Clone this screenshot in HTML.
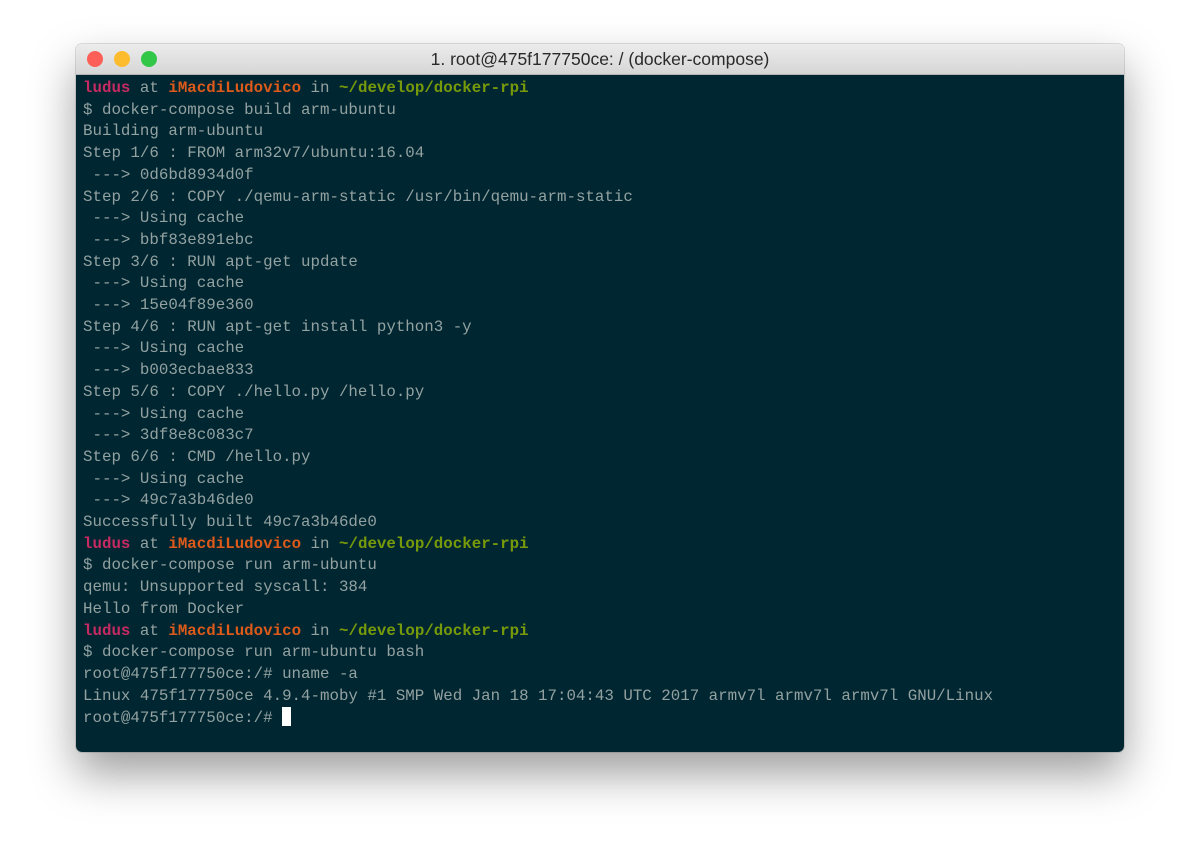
<!DOCTYPE html>
<html><head><style>
html,body{margin:0;padding:0;background:#fff;width:1200px;height:861px;overflow:hidden}
.win{position:absolute;left:76px;top:44px;width:1048px;height:708px;border-radius:6px;overflow:hidden;box-shadow:0 22px 45px rgba(0,0,0,0.38),0 0 0 1px rgba(0,0,0,0.12)}
.tb{height:30px;background:linear-gradient(#ececec,#d6d6d6);border-bottom:1px solid #b4b4b4;position:relative;font-family:"Liberation Sans",sans-serif;font-size:17.5px;color:#2a2a2a;text-align:center;line-height:31px}
.d{position:absolute;top:7px;width:16px;height:16px;border-radius:50%}
.term{position:absolute;top:31px;left:0;right:0;bottom:0;background:#002731;padding:3px 0 0 7px;font-family:"Liberation Mono",monospace;font-size:15.8px;line-height:21.7px;color:#93a1a1;white-space:pre}
.m{color:#c72a62;font-weight:bold}.o{color:#dd5a1a;font-weight:bold}.g{color:#789a0a;font-weight:bold}.b{font-weight:normal}
.cur{display:inline-block;width:9px;height:19px;background:#fff;vertical-align:-4px}
</style></head><body>
<div class="win">
<div class="tb"><span class="d" style="left:11px;background:#fc5f57"></span><span class="d" style="left:38px;background:#fdbc2e"></span><span class="d" style="left:65px;background:#33c748"></span>1. root@475f177750ce: / (docker-compose)</div>
<div class="term"><span class="m">ludus</span> <span class="b">at</span> <span class="o">iMacdiLudovico</span> <span class="b">in</span> <span class="g">~/develop/docker-rpi</span>
$ docker-compose build arm-ubuntu
Building arm-ubuntu
Step 1/6 : FROM arm32v7/ubuntu:16.04
 ---&gt; 0d6bd8934d0f
Step 2/6 : COPY ./qemu-arm-static /usr/bin/qemu-arm-static
 ---&gt; Using cache
 ---&gt; bbf83e891ebc
Step 3/6 : RUN apt-get update
 ---&gt; Using cache
 ---&gt; 15e04f89e360
Step 4/6 : RUN apt-get install python3 -y
 ---&gt; Using cache
 ---&gt; b003ecbae833
Step 5/6 : COPY ./hello.py /hello.py
 ---&gt; Using cache
 ---&gt; 3df8e8c083c7
Step 6/6 : CMD /hello.py
 ---&gt; Using cache
 ---&gt; 49c7a3b46de0
Successfully built 49c7a3b46de0
<span class="m">ludus</span> <span class="b">at</span> <span class="o">iMacdiLudovico</span> <span class="b">in</span> <span class="g">~/develop/docker-rpi</span>
$ docker-compose run arm-ubuntu
qemu: Unsupported syscall: 384
Hello from Docker
<span class="m">ludus</span> <span class="b">at</span> <span class="o">iMacdiLudovico</span> <span class="b">in</span> <span class="g">~/develop/docker-rpi</span>
$ docker-compose run arm-ubuntu bash
root@475f177750ce:/# uname -a
Linux 475f177750ce 4.9.4-moby #1 SMP Wed Jan 18 17:04:43 UTC 2017 armv7l armv7l armv7l GNU/Linux
root@475f177750ce:/# <span class="cur"></span></div>
</div>
</body></html>
